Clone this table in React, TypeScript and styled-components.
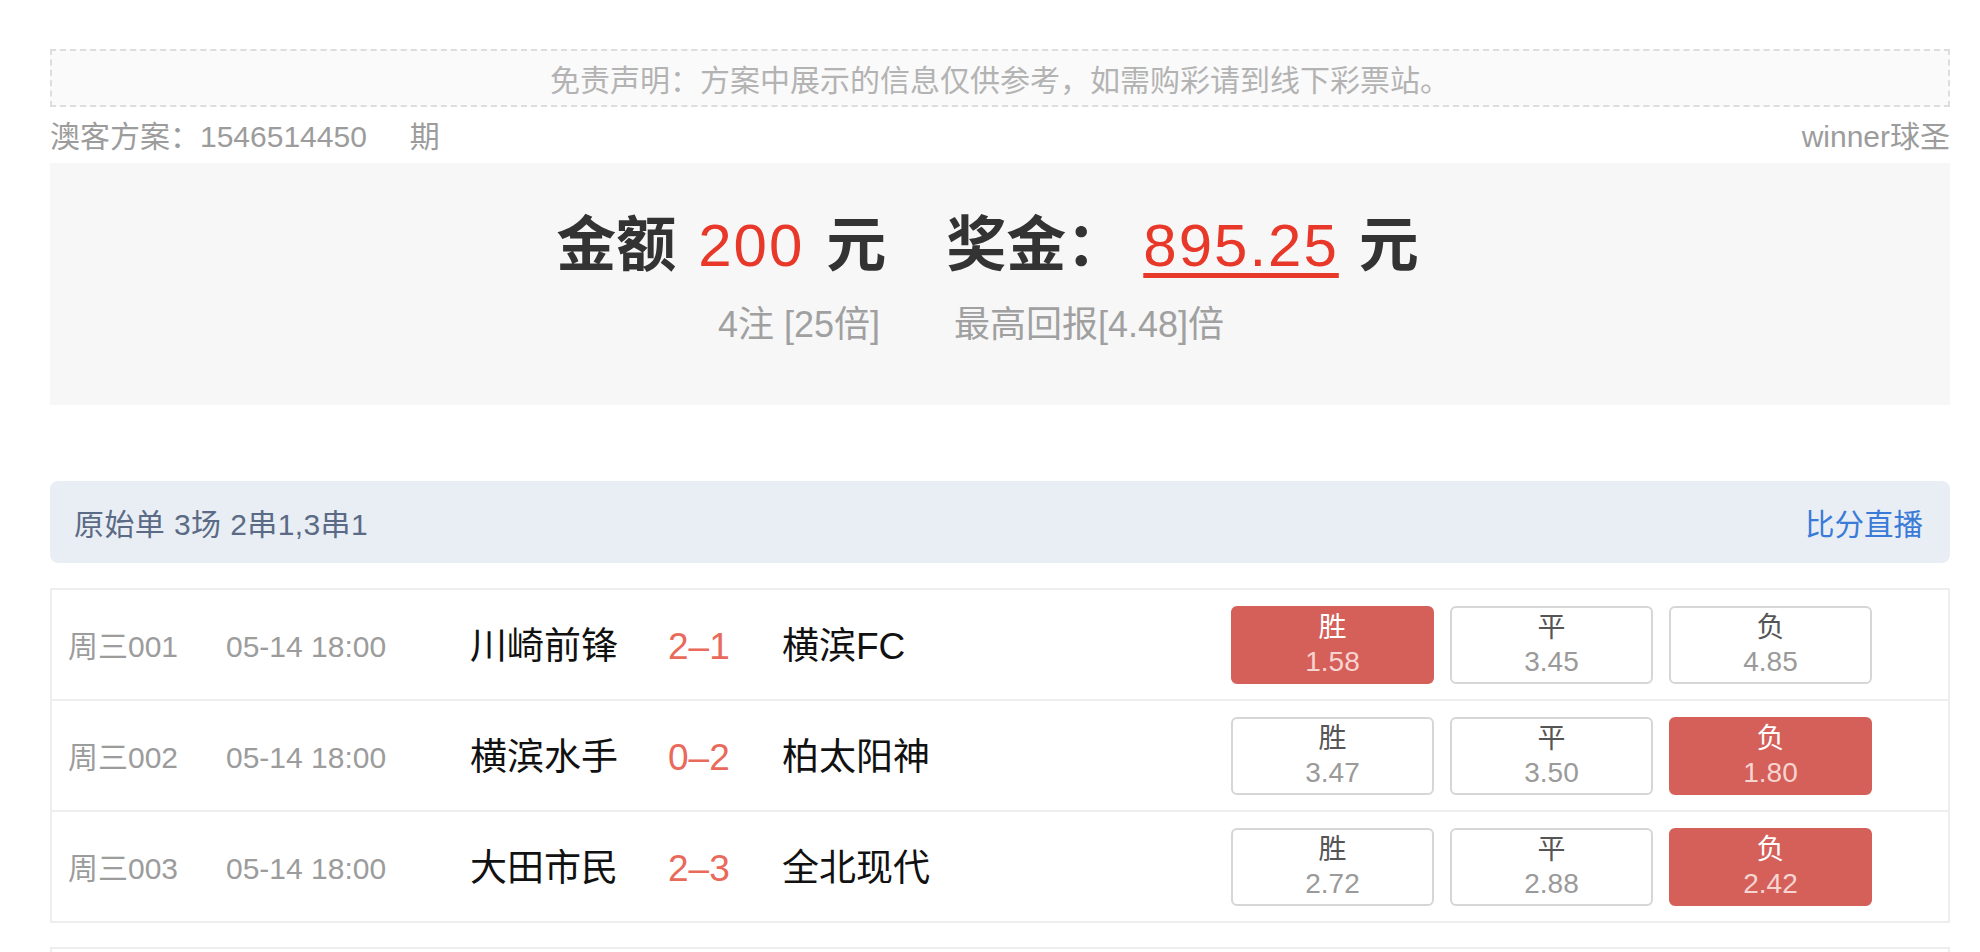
import React from "react";
import styled, { createGlobalStyle } from "styled-components";

const GlobalStyle = createGlobalStyle`
  html, body {
    margin: 0;
    padding: 0;
    background: #ffffff;
  }
  body {
    font-family: "Liberation Sans", "Noto Sans CJK SC", sans-serif;
    color: #333;
  }
  * { box-sizing: border-box; }
`;

const Page = styled.div`
  width: 1900px;
  margin: 0 0 0 50px;
  padding-top: 49px;
  padding-bottom: 40px;
`;

const Disclaimer = styled.div`
  height: 58px;
  border: 2px dashed #dddddd;
  background: #fafafa;
  display: flex;
  align-items: center;
  justify-content: center;
  font-size: 30px;
  color: #b3b3b3;
`;

const InfoLine = styled.div`
  height: 56px;
  display: flex;
  align-items: center;
  justify-content: space-between;
  font-size: 30px;
  color: #9c9c9c;
  padding-bottom: 2px;
`;

const Period = styled.span`
  margin-left: 43px;
`;

const Summary = styled.div`
  background: #f7f7f7;
  height: 242px;
  padding-top: 47px;
  display: flex;
  flex-direction: column;
  align-items: center;
`;

const AmountLine = styled.div`
  display: flex;
  align-items: baseline;
  height: 72px;
  line-height: 72px;
  font-size: 60px;
  margin-left: -25px;
`;

const Strong = styled.span<{ $gap?: number }>`
  font-weight: bold;
  color: #333333;
  margin-left: ${(p) => p.$gap ?? 0}px;
`;

const Money = styled.span<{ $gap?: number; $underline?: boolean }>`
  color: #e8382a;
  letter-spacing: 2px;
  margin-left: ${(p) => p.$gap ?? 0}px;
  text-decoration: ${(p) => (p.$underline ? "underline" : "none")};
  text-decoration-thickness: 5px;
  text-underline-offset: 7px;
`;

const SubLine = styled.div`
  display: flex;
  margin-top: 22px;
  font-size: 36px;
  line-height: 42px;
  color: #a0a0a0;
  gap: 74px;
  margin-left: -58px;
`;

const BarHeader = styled.div`
  margin-top: 76px;
  height: 82px;
  border-radius: 8px;
  background: #e9eef5;
  display: flex;
  align-items: center;
  justify-content: space-between;
  padding: 0 27px 0 24px;
  font-size: 30px;
`;

const BarTitle = styled.span`
  color: #5b6b85;
  letter-spacing: 0.4px;
`;

const BarLink = styled.span`
  color: #3b7bd8;
  font-size: 29.5px;
`;

const Table = styled.div`
  margin-top: 25px;
  border: 2px solid #eeeeee;
`;

const Row = styled.div`
  box-sizing: content-box;
  height: 109px;
  display: flex;
  align-items: center;
  padding-left: 16px;
  padding-right: 76px;
  & + & {
    border-top: 2px solid #eeeeee;
  }
`;

const TextGroup = styled.div`
  display: flex;
  align-items: center;
  padding-top: 4px;
  line-height: 44px;
`;

const Week = styled.div`
  width: 158px;
  font-size: 30px;
  color: #9c9c9c;
`;

const Time = styled.div`
  width: 244px;
  font-size: 30px;
  color: #9c9c9c;
`;

const Team = styled.div<{ $w: number }>`
  width: ${(p) => p.$w}px;
  font-size: 37px;
  color: #111111;
`;

const Score = styled.div`
  width: 114px;
  font-size: 37px;
  color: #e9695b;
`;

const Odds = styled.div`
  margin-left: auto;
  display: flex;
  gap: 16px;
`;

const OddBtn = styled.div<{ $on?: boolean }>`
  width: 203px;
  height: 78px;
  border-radius: 6px;
  border: 2px solid ${(p) => (p.$on ? "#d5605a" : "#d6d6d6")};
  background: ${(p) => (p.$on ? "#d5605a" : "#ffffff")};
  display: flex;
  flex-direction: column;
  align-items: center;
  justify-content: center;
  font-size: 28px;
  line-height: 34px;
`;

const OddLabel = styled.span<{ $on?: boolean }>`
  color: ${(p) => (p.$on ? "#ffffff" : "#555555")};
`;

const OddValue = styled.span<{ $on?: boolean }>`
  color: ${(p) => (p.$on ? "#f6d4d0" : "#9a9a9a")};
`;

const NextBlock = styled.div`
  margin-top: 24px;
  height: 200px;
  border: 2px solid #eeeeee;
`;

type Match = {
  week: string;
  time: string;
  home: string;
  score: string;
  away: string;
  odds: [string, string, string];
  pick: number;
};

const matches: Match[] = [
  { week: "周三001", time: "05-14 18:00", home: "川崎前锋", score: "2–1", away: "横滨FC", odds: ["1.58", "3.45", "4.85"], pick: 0 },
  { week: "周三002", time: "05-14 18:00", home: "横滨水手", score: "0–2", away: "柏太阳神", odds: ["3.47", "3.50", "1.80"], pick: 2 },
  { week: "周三003", time: "05-14 18:00", home: "大田市民", score: "2–3", away: "全北现代", odds: ["2.72", "2.88", "2.42"], pick: 2 },
];

const labels = ["胜", "平", "负"];

export default function App() {
  return (
    <>
      <GlobalStyle />
      <Page>
        <Disclaimer>免责声明：方案中展示的信息仅供参考，如需购彩请到线下彩票站。</Disclaimer>
        <InfoLine>
          <span>
            澳客方案：1546514450<Period>期</Period>
          </span>
          <span>winner球圣</span>
        </InfoLine>
        <Summary>
          <AmountLine>
            <Strong>金额</Strong>
            <Money $gap={22}>200</Money>
            <Strong $gap={22}>元</Strong>
            <Strong $gap={60}>奖金：</Strong>
            <Money $gap={17} $underline>895.25</Money>
            <Strong $gap={20}>元</Strong>
          </AmountLine>
          <SubLine>
            <span>4注 [25倍]</span>
            <span>最高回报[4.48]倍</span>
          </SubLine>
        </Summary>
        <BarHeader>
          <BarTitle>原始单 3场 2串1,3串1</BarTitle>
          <BarLink>比分直播</BarLink>
        </BarHeader>
        <Table>
          {matches.map((m) => (
            <Row key={m.week}>
              <TextGroup>
                <Week>{m.week}</Week>
                <Time>{m.time}</Time>
                <Team $w={198}>{m.home}</Team>
                <Score>{m.score}</Score>
                <Team $w={200}>{m.away}</Team>
              </TextGroup>
              <Odds>
                {m.odds.map((o, i) => (
                  <OddBtn key={i} $on={m.pick === i}>
                    <OddLabel $on={m.pick === i}>{labels[i]}</OddLabel>
                    <OddValue $on={m.pick === i}>{o}</OddValue>
                  </OddBtn>
                ))}
              </Odds>
            </Row>
          ))}
        </Table>
        <NextBlock />
      </Page>
    </>
  );
}
